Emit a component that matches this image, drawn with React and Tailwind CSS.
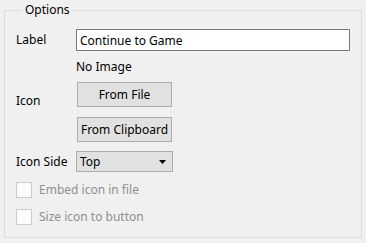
import React from 'react';

const font = { fontFamily: '"Noto Sans", "Open Sans", sans-serif' };

const Checkbox = ({ label }) => (
  <label className="flex items-center h-[16px] text-[#8f8f8f]">
    <span className="w-[16px] h-[16px] border border-[#cccccc] bg-[#fcfcfc]" />
    <span className="ml-[7px]">{label}</span>
  </label>
);

const App = () => {
  return (
    <div
      className="w-[366px] h-[243px] bg-[#f0f0f0] text-[12px] leading-[16px] text-black pl-[4px] pt-[2px] overflow-hidden"
      style={font}
    >
      <fieldset className="w-[358px] h-[236px] border border-[#dcdcdc] pl-[11px] pt-[11px]">
        <legend className="ml-[6px] px-[3px]">Options</legend>

        <div className="flex items-center h-[22px]">
          <span className="w-[60px]">Label</span>
          <input
            readOnly
            value="Continue to Game"
            className="w-[274px] h-[22px] border border-[#7a7a7a] bg-white px-[3px] outline-none"
          />
        </div>

        <div className="flex items-center mt-[8px]">
          <span className="w-[60px]">Icon</span>
          <div className="flex flex-col">
            <span>No Image</span>
            <button className="mt-[7px] ml-[1px] w-[95px] h-[25px] border border-[#adadad] bg-[#e1e1e1]">
              From File
            </button>
            <button className="mt-[10px] ml-[1px] w-[95px] h-[25px] border border-[#adadad] bg-[#e1e1e1]">
              From Clipboard
            </button>
          </div>
        </div>

        <div className="flex items-center mt-[9px]">
          <span className="w-[60px]">Icon Side</span>
          <div className="flex items-center justify-between w-[97px] h-[21px] border border-[#adadad] bg-[#e1e1e1] pl-[3px] pr-[6px]">
            <span>Top</span>
            <svg width="7" height="4" viewBox="0 0 7 4">
              <path d="M0 0h7L3.5 4z" fill="#000" />
            </svg>
          </div>
        </div>

        <div className="flex flex-col gap-[11px] mt-[10px]">
          <Checkbox label="Embed icon in file" />
          <Checkbox label="Size icon to button" />
        </div>
      </fieldset>
    </div>
  );
};

export default App;
